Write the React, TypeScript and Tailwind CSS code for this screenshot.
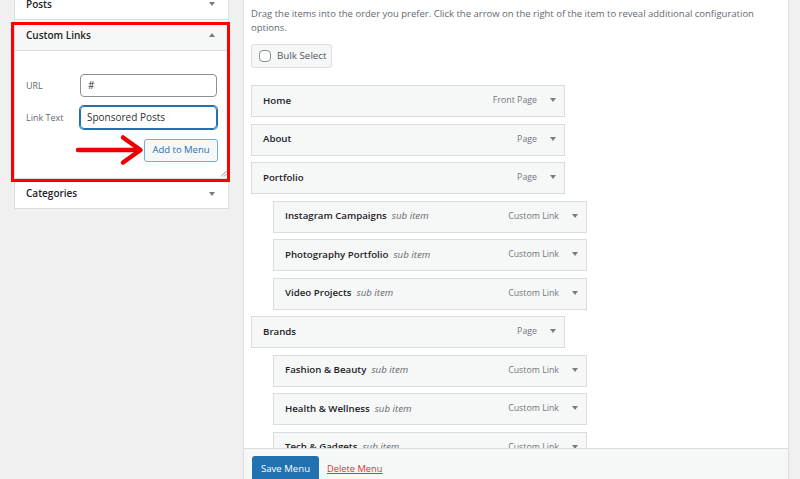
import React from "react";

const Down = ({ className = "" }: { className?: string }) => (
  <svg width="6" height="4" viewBox="0 0 6 4" className={className}>
    <path d="M0 0 L6 0 L3 4 Z" fill="#787c82" />
  </svg>
);
const Up = ({ className = "" }: { className?: string }) => (
  <svg width="6" height="4" viewBox="0 0 6 4" className={className}>
    <path d="M0 4 L6 4 L3 0 Z" fill="#787c82" />
  </svg>
);

type Item = { title: string; type: string; sub?: boolean };

const items: Item[] = [
  { title: "Home", type: "Front Page" },
  { title: "About", type: "Page" },
  { title: "Portfolio", type: "Page" },
  { title: "Instagram Campaigns", type: "Custom Link", sub: true },
  { title: "Photography Portfolio", type: "Custom Link", sub: true },
  { title: "Video Projects", type: "Custom Link", sub: true },
  { title: "Brands", type: "Page" },
  { title: "Fashion & Beauty", type: "Custom Link", sub: true },
  { title: "Health & Wellness", type: "Custom Link", sub: true },
  { title: "Tech & Gadgets", type: "Custom Link", sub: true },
];

function MenuItem({ item }: { item: Item }) {
  return (
    <div
      className={
        "h-[32px] w-[314px] shrink-0 bg-[#f6f7f7] border border-[#dcdcde] flex items-center justify-between pl-[11px] pr-[8px] " +
        (item.sub ? "ml-[22px]" : "")
      }
    >
      <div className="flex items-baseline gap-[5px]">
        <span className="font-semibold text-[#1d2327] text-[9.7px]">{item.title}</span>
        {item.sub && <span className="italic text-[#646970] text-[9.7px]">sub item</span>}
      </div>
      <div className="flex items-center gap-[13px]">
        <span className="text-[#72777c] text-[8.8px]">{item.type}</span>
        <Down className="mb-[2px]" />
      </div>
    </div>
  );
}

export default function App() {
  return (
    <div
      className="relative w-[800px] h-[479px] overflow-hidden bg-[#f0f0f1] flex items-start"
      style={{ fontFamily: "'Open Sans', 'Noto Sans', sans-serif" }}
    >
      {/* Left column */}
      <div className="ml-[14px] mt-[-11px] w-[215px] shrink-0 bg-white border-x border-b border-[#dcdcde]">
        <div className="h-[31px] border-b border-[#dcdcde] flex items-center justify-between pl-[11px] pr-[13px]">
          <span className="font-semibold text-[10px] text-[#1d2327]">Posts</span>
          <Down />
        </div>
        <div className="h-[31px] bg-[#f6f7f7] border-b border-[#dcdcde] flex items-center justify-between pl-[11px] pr-[13px]">
          <span className="font-semibold text-[10px] text-[#1d2327]">Custom Links</span>
          <Up />
        </div>
        <div className="relative h-[127px] pt-[23px] px-[11px]">
          <div className="flex items-center">
            <span className="w-[54px] text-[9px] text-[#646970]">URL</span>
            <div className="w-[137px] h-[23px] border border-[#8c8f94] rounded-[4px] flex items-center pl-[7px] text-[10px] text-[#2c3338]">
              #
            </div>
          </div>
          <div className="flex items-center mt-[9px]">
            <span className="w-[54px] text-[9px] text-[#646970]">Link Text</span>
            <div className="w-[137px] h-[23px] border border-[#2271b1] shadow-[0_0_0_1px_#2271b1] rounded-[4px] flex items-center pl-[6px] text-[10px] text-[#2c3338]">
              Sponsored Posts
            </div>
          </div>
          <div className="flex justify-end mt-[10px] mr-[-1px]">
            <div className="w-[74px] h-[23px] border border-[#72aee6] bg-[#f6f7f7] rounded-[3px] flex items-center justify-center text-[9.5px] text-[#2271b1]">
              Add to Menu
            </div>
          </div>
          <svg width="7" height="7" viewBox="0 0 7 7" className="absolute right-[1px] bottom-[1px]">
            <path d="M1 6.5 L6.5 1 M4 6.5 L6.5 4" stroke="#8c8f94" strokeWidth="1" />
          </svg>
        </div>
        <div className="h-[30px] border-t border-[#dcdcde] flex items-center justify-between pl-[11px] pr-[13px]">
          <span className="font-semibold text-[10px] text-[#1d2327]">Categories</span>
          <Down />
        </div>
      </div>

      {/* Right panel */}
      <div className="ml-[14px] w-[546px] h-[479px] shrink-0 bg-white border-x border-[#dcdcde] flex flex-col">
        <div className="flex-1 overflow-hidden pl-[7px] pt-[7px]">
          <p className="text-[9.5px] leading-[13.5px] text-[#646970] w-[530px]">
            Drag the items into the order you prefer. Click the arrow on the right of the item to reveal additional configuration options.
          </p>
          <div className="mt-[10px] w-[81px] h-[24px] border border-[#dcdcde] bg-[#f6f7f7] rounded-[3px] flex items-center pl-[7px] gap-[6px]">
            <span className="w-[12px] h-[12px] border border-[#8c8f94] rounded-[4px] bg-white" />
            <span className="text-[9.8px] text-[#50575e]">Bulk Select</span>
          </div>
          <div className="mt-[17px] flex flex-col gap-[6.5px]">
            {items.map((it) => (
              <MenuItem key={it.title} item={it} />
            ))}
          </div>
        </div>
        <div className="h-[31px] shrink-0 border-t border-[#dcdcde] bg-[#f6f7f7] flex items-start pl-[8px] pt-[7px] gap-[8px]">
          <div className="w-[67px] h-[28px] bg-[#2271b1] rounded-[3px] text-white text-[9.6px] flex items-center justify-center pb-[2px]">
            Save Menu
          </div>
          <span className="mt-[6px] text-[9.3px] text-[#d63638] underline">Delete Menu</span>
        </div>
      </div>

      {/* Annotation overlay */}
      <div className="absolute left-[11px] top-[22px] w-[219px] h-[160px] border-[3px] border-[#ff0000] pointer-events-none" />
      <svg className="absolute left-[70px] top-[130px]" width="80" height="40" viewBox="70 130 80 40">
        <path d="M78 150 L139 150" stroke="#ee0000" strokeWidth="4.5" strokeLinecap="round" />
        <path d="M123 137.5 L140.5 150 L123 162.5" stroke="#ee0000" strokeWidth="4.5" strokeLinecap="round" strokeLinejoin="round" fill="none" />
      </svg>
    </div>
  );
}
